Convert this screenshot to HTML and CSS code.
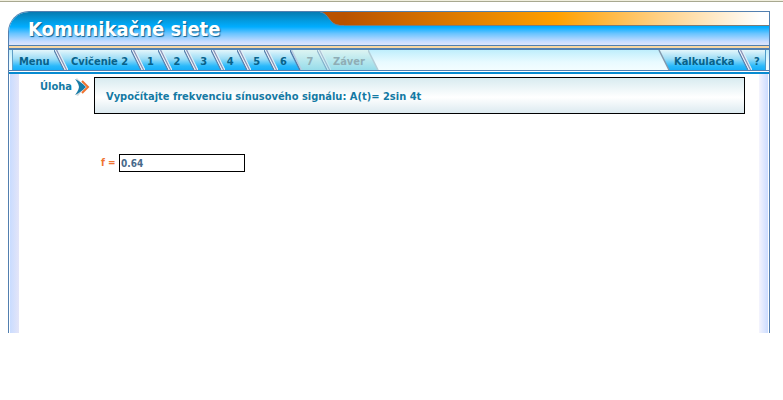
FILE: index.html
```html
<!DOCTYPE html>
<html lang="sk">
<head>
<meta charset="utf-8">
<title>Komunikačné siete</title>
<link rel="stylesheet" href="styles.css">
</head>
<body>
<svg class="defs" aria-hidden="true">
  <defs>
    <linearGradient id="on" x1="0" y1="0" x2="0" y2="1">
      <stop offset="0" stop-color="#e4f6fb"/><stop offset=".45" stop-color="#9bdcf6"/><stop offset=".8" stop-color="#29b9fb"/><stop offset="1" stop-color="#16aef8"/>
    </linearGradient>
    <linearGradient id="off" x1="0" y1="0" x2="0" y2="1">
      <stop offset="0" stop-color="#dcf4f2"/><stop offset="1" stop-color="#96dcea"/>
    </linearGradient>
    <symbol id="lines" viewBox="0 0 14 20">
      <path d="M0 0L10 20H14L4 0Z" fill="#cfdcee"/>
      <path d="M0 0L10 20" stroke="#5c82ad" stroke-width="1.3" fill="none"/>
      <path d="M1.300 0L11.300 20" stroke="#eef4fa" stroke-width="1" fill="none"/>
      <path d="M2.600 0L12.600 20" stroke="#8790b4" stroke-width="1.2" fill="none"/>
      <path d="M4 0L14 20" stroke="#e6f1f8" stroke-width="1" fill="none"/>
    </symbol>
  </defs>
</svg>
<div class="topline"></div>
<div class="frame">
  <header class="header">
    <h1>Komunikačné siete</h1>
    <div class="ribbon">
      <svg class="curve" viewBox="0 0 24 14" aria-hidden="true">
        <path d="M0 0C9 1 9 13 20 13H24V0Z" fill="#b95200"/>
        <path d="M0 0C9 1 9 13 20 13.500H24" fill="none" stroke="#6685a0"/>
      </svg>
      <div class="fade"></div>
    </div>
  </header>
  <div class="peach"></div>
  <nav class="nav">
    <div class="tabs">
      <a class="tab menu" href="#">Menu</a>
      <svg class="sep on" viewBox="0 0 14 20" aria-hidden="true"><use href="#lines"/></svg>
      <a class="tab exercise" href="#">Cvičenie 2</a>
      <svg class="sep on" viewBox="0 0 14 20" aria-hidden="true"><use href="#lines"/></svg>
      <div class="steps">
        <div class="step on"><a href="#">1</a><svg class="sep" viewBox="0 0 14 20" aria-hidden="true"><use href="#lines"/></svg></div>
        <div class="step on"><a href="#">2</a><svg class="sep" viewBox="0 0 14 20" aria-hidden="true"><use href="#lines"/></svg></div>
        <div class="step on"><a href="#">3</a><svg class="sep" viewBox="0 0 14 20" aria-hidden="true"><use href="#lines"/></svg></div>
        <div class="step on"><a href="#">4</a><svg class="sep" viewBox="0 0 14 20" aria-hidden="true"><use href="#lines"/></svg></div>
        <div class="step on"><a href="#">5</a><svg class="sep" viewBox="0 0 14 20" aria-hidden="true"><use href="#lines"/></svg></div>
        <div class="step on"><a href="#">6</a><svg class="sep" viewBox="0 0 14 20" aria-hidden="true"><path d="M0 0H15V20H10Z" fill="url(#off)"/><path d="M0 0L10 20" stroke="#527caa" stroke-width="1.5"/><path d="M1.500 0L11.500 20" stroke="#b9cbe0" stroke-width="1.5"/></svg></div>
        <div class="step off"><a>7</a><svg class="sep" viewBox="0 0 14 20" aria-hidden="true"><g opacity=".5"><use href="#lines"/></g></svg></div>
      </div>
      <a class="tab off last">Záver</a>
      <svg class="sep end" viewBox="0 0 14 20" aria-hidden="true"><path d="M0 0L10 20H0Z" fill="url(#off)"/><path d="M0 0L10 20" stroke="#b3ced8" stroke-width="1.5"/></svg>
    </div>
    <div class="tabs tools">
      <svg class="sep" viewBox="0 0 14 20" aria-hidden="true"><path d="M1 0H14V20H11Z" fill="url(#on)"/><path d="M1 0L11 20" stroke="#8399ae" stroke-width="1.5"/></svg>
      <a class="tab calc" href="#">Kalkulačka</a>
      <svg class="sep on" viewBox="0 0 14 20" aria-hidden="true"><use href="#lines"/></svg>
      <a class="tab help" href="#">?</a>
    </div>
  </nav>
  <div class="rule"></div>
  <main class="content">
    <section class="task">
      <h2>Úloha</h2>
      <svg class="arrows" viewBox="0 0 16 20" aria-hidden="true">
        <path d="M2 1L10 10L3 19L1 18L4 10L1 2Z" fill="#d3dadd"/>
        <path d="M7 3L14 10L8 17" fill="none" stroke="#fff" stroke-width="4"/>
        <path d="M7 4L13 10L7 16" fill="none" stroke="#ef7330" stroke-width="2"/>
        <path d="M0 2C4 4 7 6 11 10C7 14 4 16 0 18C2 15 4 13 4 10C4 7 2 5 0 2Z" fill="#177ca8"/>
      </svg>
      <p class="question">Vypočítajte frekvenciu sínusového signálu: A(t)= 2sin 4t</p>
    </section>
    <form class="answer">
      <label for="f">f =</label>
      <input id="f" type="text" value="0.64">
    </form>
  </main>
</div>
</body>
</html>
```
FILE: styles.css
```css
* { box-sizing: border-box; }
body {
  margin: 0;
  background: #fff;
  font: bold 11px/14px "DejaVu Sans Condensed", "DejaVu Sans", sans-serif;
}
.defs { position: absolute; width: 0; height: 0; }
a { color: inherit; text-decoration: none; }
.topline { height: 2px; background: #f1efdf; border-bottom: 1px solid #a8a890; }
.frame {
  margin: 9px 13px 0 8px;
  border: 1px solid #527faf;
  border-bottom: 0;
  border-top-left-radius: 21px;
  overflow: hidden;
}
.header {
  display: flex;
  align-items: flex-start;
  height: 34px;
  border-bottom: 1px solid #527faf;
  background: linear-gradient(#087bb1, #0499dc 25%, #00adff 45%, #68c4ff 65%, #c9dcff 90%, #dce5fb);
}
h1 {
  flex: 0 0 311px;
  margin: 0;
  padding: 5px 0 0 19px;
  color: #fff;
  font: bold 20px/24px "DejaVu Sans Condensed", "DejaVu Sans", sans-serif;
  text-shadow: 1px 1px 1px #075f91;
}
.ribbon { display: flex; flex: 1; height: 14px; }
.curve { width: 24px; height: 14px; }
.fade {
  flex: 1;
  border-bottom: 1px solid #7b7c78;
  background: linear-gradient(90deg, #b95200, #ffa000 50%, #ffd084 74%, #fff 98%);
}
.peach { height: 4px; background: #f8d6a1; border-bottom: 2px solid #527faf; }
.nav {
  display: flex;
  justify-content: space-between;
  height: 20px;
  padding: 0 3px;
  background: linear-gradient(#bfeefc, #e8faff 60%, #f3fdff);
  color: #07628a;
}
.tabs { display: flex; }
.tab, .step, .on { background: linear-gradient(#e4f6fb, #9bdcf6 45%, #29b9fb 80%, #16aef8); }
.tab, .step { line-height: 24px; white-space: nowrap; }
.menu { width: 42px; padding-left: 6px; border-left: 1px solid #5f9fc7; }
.exercise { width: 63px; padding-left: 3px; }
.steps { display: flex; width: 186px; }
.step { display: flex; flex: 1; justify-content: space-between; }
.step a { padding-left: 2px; }
.tab.off, .step.off { background: linear-gradient(#dcf4f2, #96dcea); color: #8fadb5; }
.last { width: 37px; padding-left: 2px; }
.sep { flex: none; width: 14px; height: 20px; }
.calc { width: 66px; padding-left: 2px; }
.help { width: 14px; padding-left: 2px; border-right: 1px solid #4d9bc9; }
.rule {
  height: 4px;
  border-top: 1px solid #527faf;
  border-bottom: 2px solid #078bd1;
  background: #fff;
}
.content {
  min-height: 259px;
  padding: 3px 24px 0 31px;
  background:
    linear-gradient(90deg, #c9dcff, #e4e5f8) left 1px top / 9px 100% no-repeat,
    linear-gradient(90deg, #f4f4fd, #cbdcff) right 1px top / 9px 100% no-repeat,
    #fff;
}
.task { display: flex; align-items: flex-start; color: #147aa4; }
h2 { width: 35px; margin: 3px 0 0; font: inherit; }
.arrows { width: 16px; height: 20px; margin-right: 3px; }
.question {
  flex: 1;
  margin: 0;
  padding: 12px 11px 9px;
  border: 1px solid #000;
  background: linear-gradient(#d8ebf0, #fff 55%, #dceaf0);
}
.answer { display: flex; align-items: center; gap: 4px; padding: 40px 0 0 61px; }
.answer label { width: 14px; color: #ef7330; font-size: 10px; white-space: nowrap; }
.answer input {
  width: 126px;
  height: 18px;
  padding: 0 1px;
  border: 1px solid #000;
  border-radius: 0;
  background: #fff;
  color: #48698a;
  font: bold 10px/14px "DejaVu Sans Condensed", "DejaVu Sans", sans-serif;
}
```
